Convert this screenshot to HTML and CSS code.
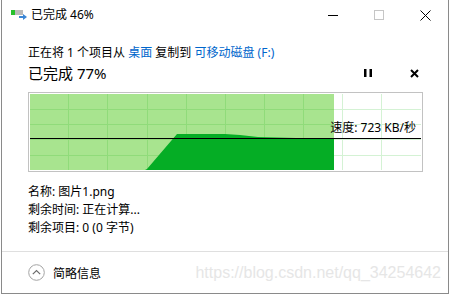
FILE: index.html
```html
<!DOCTYPE html>
<html>
  <head>
    <meta charset="utf-8">
    <title>已完成 46%</title>
    <link rel="stylesheet" href="styles.css">
  </head>

  <body>
    <div id='window'>
      <!-- Title bar -->
      <div class='titlebar'>
        <svg class='app-icon' width='16' height='12' viewBox='0 0 16 12'>
          <rect x='0' y='1' width='4' height='5' fill='#27c12b'/>
          <rect x='4' y='1' width='8' height='5' fill='#b9b9b9'/>
          <rect x='8' y='7' width='5' height='2' fill='#3b86d6'/>
          <polygon points='12,5 16,8 12,11' fill='#3b86d6'/>
        </svg>
        <span class='title'>已完成 46%</span>
        <div class='caption-buttons'>
          <span class='caption-btn'>
            <svg width='10' height='10' viewBox='0 0 10 10'><line x1='0' y1='5.5' x2='10' y2='5.5' stroke='#000'/></svg>
          </span>
          <span class='caption-btn'>
            <svg width='10' height='10' viewBox='0 0 10 10'><rect x='0.5' y='0.5' width='9' height='9' fill='none' stroke='#c6c6c6'/></svg>
          </span>
          <span class='caption-btn'>
            <svg width='11' height='11' viewBox='0 0 11 11'><path d='M0.5 0.5 L10.5 10.5 M10.5 0.5 L0.5 10.5' stroke='#000' stroke-width='1'/></svg>
          </span>
        </div>
      </div>

      <!-- Progress -->
      <div class='content'>
        <div class='copy-line'>正在将 1 个项目从 <a class='link'>桌面</a> 复制到 <a class='link'>可移动磁盘 (F:)</a></div>
        <div class='progress-row'>
          <span class='progress-text'>已完成 77%</span>
          <span class='ctrl'>
            <svg width='8' height='8' viewBox='0 0 8 8'><rect x='0' y='0' width='2.5' height='8' fill='#000'/><rect x='5.5' y='0' width='2.5' height='8' fill='#000'/></svg>
          </span>
          <span class='ctrl'>
            <svg width='9' height='9' viewBox='0 0 9 9'><path d='M1 1 L8 8 M8 1 L1 8' stroke='#000' stroke-width='2'/></svg>
          </span>
        </div>

        <div class='graph'>
          <svg width='391' height='76' viewBox='0 0 391 76'>
            <rect width='391' height='76' fill='#fff'/>
            <rect width='304' height='76' fill='#a8e48f'/>
            <g stroke='#d4f2d4' stroke-width='1'>
              <line x1='312.5' y1='0' x2='312.5' y2='76'/>
              <line x1='351.5' y1='0' x2='351.5' y2='76'/>
              <line x1='304' y1='15.5' x2='391' y2='15.5'/>
              <line x1='304' y1='30.5' x2='391' y2='30.5'/>
              <line x1='304' y1='45.5' x2='391' y2='45.5'/>
              <line x1='304' y1='61.5' x2='391' y2='61.5'/>
            </g>
            <g stroke='#90db7a' stroke-width='1'>
              <line x1='38.5' y1='0' x2='38.5' y2='76'/>
              <line x1='77.5' y1='0' x2='77.5' y2='76'/>
              <line x1='117.5' y1='0' x2='117.5' y2='76'/>
              <line x1='156.5' y1='0' x2='156.5' y2='76'/>
              <line x1='195.5' y1='0' x2='195.5' y2='76'/>
              <line x1='234.5' y1='0' x2='234.5' y2='76'/>
              <line x1='273.5' y1='0' x2='273.5' y2='76'/>
              <line x1='0' y1='15.5' x2='304' y2='15.5'/>
              <line x1='0' y1='30.5' x2='304' y2='30.5'/>
              <line x1='0' y1='45.5' x2='304' y2='45.5'/>
              <line x1='0' y1='61.5' x2='304' y2='61.5'/>
            </g>
            <polygon fill='#05ad25' points='115,76 117,75 147,40 195,40 210,41 228,43 304,45 304,76'/>
            <line x1='0' y1='44.5' x2='391' y2='44.5' stroke='#000' stroke-width='1'/>
          </svg>
          <span class='speed'>速度: 723 KB/秒</span>
        </div>

        <div class='details'>
          <div>名称: 图片1.png</div>
          <div>剩余时间: 正在计算...</div>
          <div>剩余项目: 0 (0 字节)</div>
        </div>
      </div>

      <!-- Footer -->
      <div class='footer'>
        <svg class='less-icon' width='17' height='17' viewBox='0 0 17 17'>
          <circle cx='8.5' cy='8.5' r='7.8' fill='none' stroke='#a3a3a3' stroke-width='1'/>
          <path d='M4.8 10.2 L8.5 6.5 L12.2 10.2' fill='none' stroke='#6b6b6b' stroke-width='1.2'/>
        </svg>
        <span>简略信息</span>
        <span class='watermark'>https://blog.csdn.net/qq_34254642</span>
      </div>
    </div>
  </body>
</html>
```

FILE: styles.css
```css
* {
  margin: 0;
  padding: 0;
  box-sizing: border-box;
  font-family: 'Noto Sans', 'Noto Sans CJK SC', sans-serif;
  font-size: 12px;
  color: #000;
}
html, body {
  overflow: hidden;
}
body {
  background-color: white;
}
#window {
  margin-left: 1px;
  width: 448px;
  height: 294px;
  border-left: 1px solid #8a8a8a;
  border-right: 1px solid #8a8a8a;
  border-bottom: 1px solid #8a8a8a;
  background-color: white;
  display: flex;
  flex-direction: column;
}
.titlebar {
  height: 30px;
  display: flex;
  align-items: center;
}
.app-icon {
  margin-left: 9px;
}
.title {
  margin-left: 4px;
  line-height: 30px;
}
.caption-buttons {
  margin-left: auto;
  display: flex;
}
.caption-btn {
  width: 46px;
  height: 30px;
  display: flex;
  align-items: center;
  justify-content: center;
}
.content {
  padding: 0 11px 0 26px;
}
.copy-line {
  margin-top: 14px;
  line-height: 17px;
  white-space: nowrap;
}
.link {
  color: #0066cc;
}
.progress-row {
  margin-top: 2px;
  height: 20px;
  display: flex;
  align-items: center;
}
.progress-text {
  font-size: 15px;
  line-height: 20px;
  margin-right: auto;
}
.ctrl {
  width: 46px;
  height: 20px;
  display: flex;
  align-items: center;
  justify-content: center;
}
.graph {
  position: relative;
  margin-top: 9px;
  width: 395px;
  height: 80px;
  border: 1px solid #c2c2c2;
  padding: 1px;
}
.graph svg {
  display: block;
}
.speed {
  position: absolute;
  top: 28px;
  right: 6px;
  line-height: 14px;
  white-space: nowrap;
}
.details {
  margin-top: 11px;
  line-height: 18px;
}
.footer {
  margin-top: auto;
  height: 42px;
  border-top: 1px solid #dfdfdf;
  padding: 0 7px 0 26px;
  display: flex;
  align-items: center;
}
.less-icon {
  margin-right: 8px;
}
.watermark {
  margin-left: auto;
  font-family: 'Liberation Sans', sans-serif;
  font-size: 16px;
  color: #e6e6e6;
}
```
